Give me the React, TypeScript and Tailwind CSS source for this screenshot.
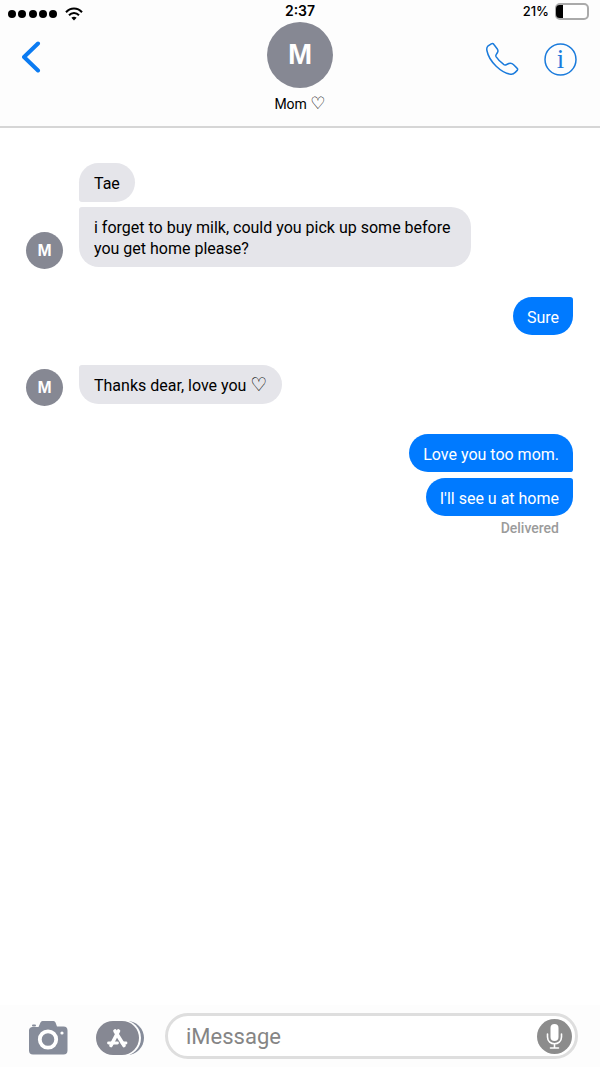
import { clsx } from 'clsx'

interface MessageGroup {
  id: string
  sender: 'them' | 'me'
  texts: string[]
  status?: string
}

const CONTACT = { name: 'Mom', initial: 'M' }

const GROUPS: MessageGroup[] = [
  {
    id: 'g1',
    sender: 'them',
    texts: ['Tae', 'i forget to buy milk, could you pick up some before you get home please?'],
  },
  { id: 'g2', sender: 'me', texts: ['Sure'] },
  { id: 'g3', sender: 'them', texts: ['Thanks dear, love you ♡'] },
  { id: 'g4', sender: 'me', texts: ['Love you too mom.', "I'll see u at home"], status: 'Delivered' },
]

function WifiIcon() {
  return (
    <svg width="18" height="14" viewBox="0 0 18 14" fill="none" stroke="black" strokeWidth="2">
      <path d="M1 5.2C5.5 0.3 12.5 0.3 17 5.2" />
      <path d="M4 8.2C6.8 5.2 11.2 5.2 14 8.2" />
      <path d="M9 13.4L6.4 10.7C7.8 9.4 10.2 9.4 11.6 10.7Z" fill="black" stroke="none" />
    </svg>
  )
}

function BatteryIcon() {
  return (
    <svg width="34" height="17" viewBox="0 0 34 17">
      <rect x="1" y="1" width="32" height="15" rx="4" fill="white" stroke="#aaaaaa" strokeWidth="2" />
      <path d="M8 2H4.5Q1 2 1 6V11Q1 15 4.5 15H8Z" fill="black" />
    </svg>
  )
}

function StatusBar() {
  return (
    <div className="grid h-[22px] grid-cols-3 items-center px-2 font-['Inter',sans-serif] text-[14px] leading-[22px] text-black">
      <div className="flex items-center gap-[7px] pt-[5px]">
        <svg width="50" height="8" viewBox="0 0 50 8">
          {[4, 14, 25, 35, 45].map((cx) => (
            <circle key={cx} cx={cx} cy="4" r="4" />
          ))}
        </svg>
        <WifiIcon />
      </div>
      <div className="text-center font-semibold">2:37</div>
      <div className="flex items-center justify-end gap-[6px] pr-[3px] text-[13px] font-medium">
        21%
        <BatteryIcon />
      </div>
    </div>
  )
}

function Header() {
  return (
    <header className="border-b-2 border-[#d6d6d6] bg-[#fdfdfd]">
      <StatusBar />
      <div className="grid h-[104px] grid-cols-3 items-start px-[22px]">
        <button aria-label="Back" className="mt-[19px] w-5">
          <svg width="20" height="32" viewBox="0 0 20 32" fill="none" stroke="#0b7bf2" strokeWidth="4" strokeLinecap="round" strokeLinejoin="round">
            <path d="M16 2.5L2 16L16 29.5" />
          </svg>
        </button>
        <div className="flex flex-col items-center gap-[6px]">
          <div className="flex size-[66px] items-center justify-center rounded-full bg-[#868893] font-['Liberation_Sans',sans-serif] text-[29px] font-bold text-white">
            {CONTACT.initial}
          </div>
          <h1 className="text-[14px] leading-5 text-black">
            {CONTACT.name} <span className="text-[17px] leading-none">♡</span>
          </h1>
        </div>
        <div className="mt-5 flex items-center justify-end gap-6 text-[#1a7bdc]">
          <button aria-label="Call">
            <svg width="34" height="34" viewBox="0 0 34 34" fill="none" stroke="currentColor" strokeWidth="1.5" strokeLinejoin="round">
              <path d="M5.3 1.9L1.8 4.2C0.8 5.2 0.6 6.8 0.9 8.5C2 14.2 5.5 19.7 10.2 24.2C14.6 28.4 19.4 31.5 24.5 32.2C26.4 32.5 27.9 31.9 29 30.6L31.2 28.4C31.9 27.6 31.8 26.8 31 26.1L27.6 22.7C26.2 21.3 24.4 20.9 22.8 21.5L20.2 22.7C19.3 23.1 18.2 22.9 17.4 22.2C14.6 20.1 12.1 17.6 10.2 14.8C9.7 14 9.7 13.2 10.3 12.4L11.5 10.5C12.1 9.4 12.1 8.4 11.5 7.3L7.9 2.5C7.3 1.6 6.3 1.3 5.3 1.9Z" />
            </svg>
          </button>
          <button aria-label="Details" className="mr-px">
            <svg width="33" height="33" viewBox="0 0 33 33" fill="currentColor">
              <circle cx="16.5" cy="16.5" r="15.5" fill="none" stroke="currentColor" strokeWidth="1.5" />
              <text x="16.5" y="25" textAnchor="middle" className="font-['Liberation_Serif',serif] text-[27px]">
                i
              </text>
            </svg>
          </button>
        </div>
      </div>
    </header>
  )
}

function Bubble({ text, mine, first, last }: { text: string; mine: boolean; first: boolean; last: boolean }) {
  return (
    <p
      className={clsx(
        'w-fit rounded-[20px] pt-[10px] text-[16px] leading-[21px]',
        mine ? 'bg-[#007aff] px-[14px] pb-[7px] text-white' : 'bg-[#e5e5ea] px-[15px] pb-2 text-black',
        mine && (first && !last ? 'rounded-br-[3px]' : 'rounded-tr-[3px]'),
        !mine && (first && !last ? 'rounded-bl-[3px]' : 'rounded-tl-[3px]'),
      )}
    >
      {/* the heart glyph is small for its size, so it gets a bigger one */}
      {text.split(/(♡)/).map((part, i) =>
        part === '♡' ? (
          <span key={i} className="text-[19px] leading-none">
            {part}
          </span>
        ) : (
          part
        ),
      )}
    </p>
  )
}

function Group({ group }: { group: MessageGroup }) {
  const mine = group.sender === 'me'
  return (
    <li className={clsx('flex items-end gap-4', mine && 'justify-end')}>
      {!mine && (
        <div className="-mb-0.5 flex size-[37px] shrink-0 items-center justify-center rounded-full bg-[#868893] font-['Liberation_Sans',sans-serif] text-[17px] font-bold text-white">
          {CONTACT.initial}
        </div>
      )}
      <div className={clsx('flex max-w-[392px] flex-col', mine ? 'items-end gap-[6px]' : 'gap-[5px]')}>
        {group.texts.map((text, i) => (
          <Bubble key={text} text={text} mine={mine} first={i === 0} last={i === group.texts.length - 1} />
        ))}
        {group.status && (
          <span className="pr-[14px] text-[14px] leading-3 font-medium text-[#9b9b9b]">{group.status}</span>
        )}
      </div>
    </li>
  )
}

function Composer() {
  return (
    <form className="flex items-center bg-[#fdfdfd] pt-2 pr-[22px] pb-2 pl-7" onSubmit={(e) => e.preventDefault()}>
      <button type="button" aria-label="Camera" className="mt-1">
        <svg width="40" height="34" viewBox="0 0 40 34" fill="#868c9a">
          <path d="M12.5 1.5Q13 0 14.5 0H25.5Q27 0 27.5 1.5L29 5.5H35.5Q39.5 5.5 39.5 9.5V29.5Q39.5 33.5 35.5 33.5H5Q1 33.5 1 29.5V9.5Q1 6.5 4 6H10.5Z" />
          <rect x="4" y="3.5" width="4" height="2" rx="1" />
          <circle cx="20" cy="18.5" r="8.2" stroke="white" strokeWidth="3.8" />
          <circle cx="34" cy="12" r="1.6" fill="white" />
        </svg>
      </button>
      <button type="button" aria-label="Apps" className="mt-1 ml-7">
        <svg width="48" height="34" viewBox="0 0 48 34">
          <rect x="6" y="0" width="42" height="34" rx="17" fill="#868c9a" />
          <rect x="0" y="-1" width="45" height="36" rx="18" fill="white" />
          <rect x="0" y="0" width="43" height="34" rx="17" fill="#868893" />
          <g fill="none" stroke="white" strokeLinecap="round">
            <path d="M22.5 10L15 24.5M19 10L28 24.5" strokeWidth="3.6" />
            <path d="M12.5 22H21.5M26 22H30" strokeWidth="2.8" />
          </g>
        </svg>
      </button>
      <div className="ml-[21px] flex h-[46px] min-w-0 flex-1 items-center rounded-full border-[3px] border-[#dedede] bg-white pr-[3px] pl-[18px]">
        <input
          type="text"
          aria-label="Message"
          placeholder="iMessage"
          className="min-w-0 flex-1 bg-transparent text-[22px] text-black outline-none placeholder:text-[#858585]"
        />
        <button type="button" aria-label="Dictate">
          <svg width="35" height="35" viewBox="0 0 35 35">
            <circle cx="17.5" cy="17.5" r="17.5" fill="#8c8c8c" />
            <rect x="13.5" y="5" width="8" height="17" rx="4" fill="white" />
            <path d="M10.5 15V18C10.5 27 24.5 27 24.5 18V15M17.5 25V29M13.5 29H21.5" fill="none" stroke="white" strokeWidth="1.6" strokeLinecap="round" />
          </svg>
        </button>
      </div>
    </form>
  )
}

export default function App() {
  return (
    <div className="flex min-h-screen flex-col bg-white font-['Roboto','DejaVu_Sans',sans-serif]">
      <Header />
      <main className="flex-1 pt-[35px] pr-[27px] pl-[26px]">
        <ul className="flex flex-col gap-[30px]">
          {GROUPS.map((group) => (
            <Group key={group.id} group={group} />
          ))}
        </ul>
      </main>
      <Composer />
    </div>
  )
}
